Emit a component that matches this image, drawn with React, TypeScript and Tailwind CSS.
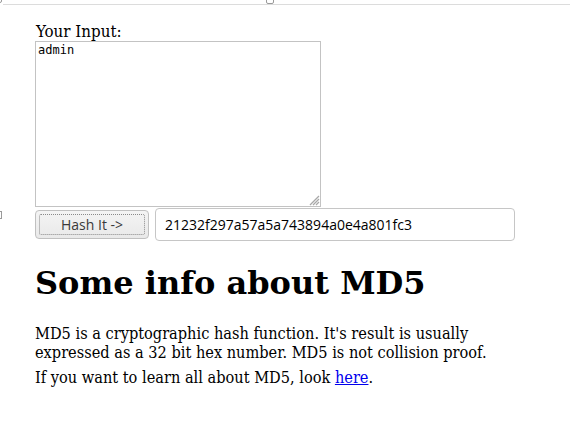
import { useState } from "react";

const body = "font-['DejaVu_Serif_Condensed','DejaVu_Serif',serif] font-stretch-condensed";

export default function App() {
  const [input, setInput] = useState("admin");
  const hash = "21232f297a57a5a743894a0e4a801fc3";

  return (
    <div className="relative min-h-[426px] w-[570px] overflow-hidden bg-white text-black">
      {/* frame top edge */}
      <div className="ml-[3px] h-[5px] border-b border-[#dcdcdc]" />
      <div className="absolute left-[-4px] top-[-3px] h-[6px] w-[6px] rounded-[2px] border border-[#9a9a9a]" />
      <div className="absolute left-[266px] top-[-4px] h-[8px] w-[8px] rounded-[2px] border border-[#9a9a9a] bg-white" />
      <div className="absolute left-[-5px] top-[211px] h-[8px] w-[7px] border border-[#9a9a9a]" />

      <main className={`${body} w-[515px] pl-[35px] pt-[17px]`}>
        <label className="block pl-[1px] text-[16.8px] leading-[19px]">Your Input:</label>
        <div className="relative h-[166px] w-[286px]">
          <textarea
            value={input}
            onChange={(e) => setInput(e.target.value)}
            className="block h-full w-full resize-none border border-[#c3c3c3] bg-white px-[2px] py-[1px] font-['DejaVu_Sans_Mono',monospace] text-[12px] leading-[14px] outline-none"
          />
          <svg className="pointer-events-none absolute bottom-[1px] right-[1px]" width="12" height="12" viewBox="0 0 12 12">
            <path d="M11 2 L2 11 M11 5 L5 11 M11 8 L8 11" stroke="#a8a8a8" strokeWidth="1.3" />
          </svg>
        </div>

        <div className="mt-[1px] flex items-center gap-[6px] font-['Open_Sans',sans-serif] font-stretch-normal">
          <button className="relative h-[29px] w-[114px] rounded-[4px] border border-[#c0c0c0] bg-gradient-to-b from-[#f4f4f4] to-[#e9e9e9] text-[14px] text-[#3a3a3a]">
            <span className="absolute inset-[3px] rounded-[2px] border border-dotted border-[#8a8a8a]" />
            Hash It -&gt;
          </button>
          <input
            readOnly
            value={hash}
            className="h-[33px] w-[360px] rounded-[4px] border border-[#c6c6c6] bg-white px-[9px] text-[14px] text-black outline-none"
          />
        </div>

        <h1 className="mt-[24px] font-['DejaVu_Serif',serif] text-[32px] font-bold leading-[37px] font-stretch-normal">
          Some info about MD5
        </h1>

        <p className="mt-[22px] text-[16.2px] leading-[19px]">
          MD5 is a cryptographic hash function. It's result is usually expressed as a 32 bit hex
          number. MD5 is not collision proof.
        </p>
        <p className="mt-[6px] text-[16.2px] leading-[19px]">
          If you want to learn all about MD5, look{" "}
          <a href="#" className="text-[#0000ee] underline">
            here
          </a>
          .
        </p>
      </main>
    </div>
  );
}
